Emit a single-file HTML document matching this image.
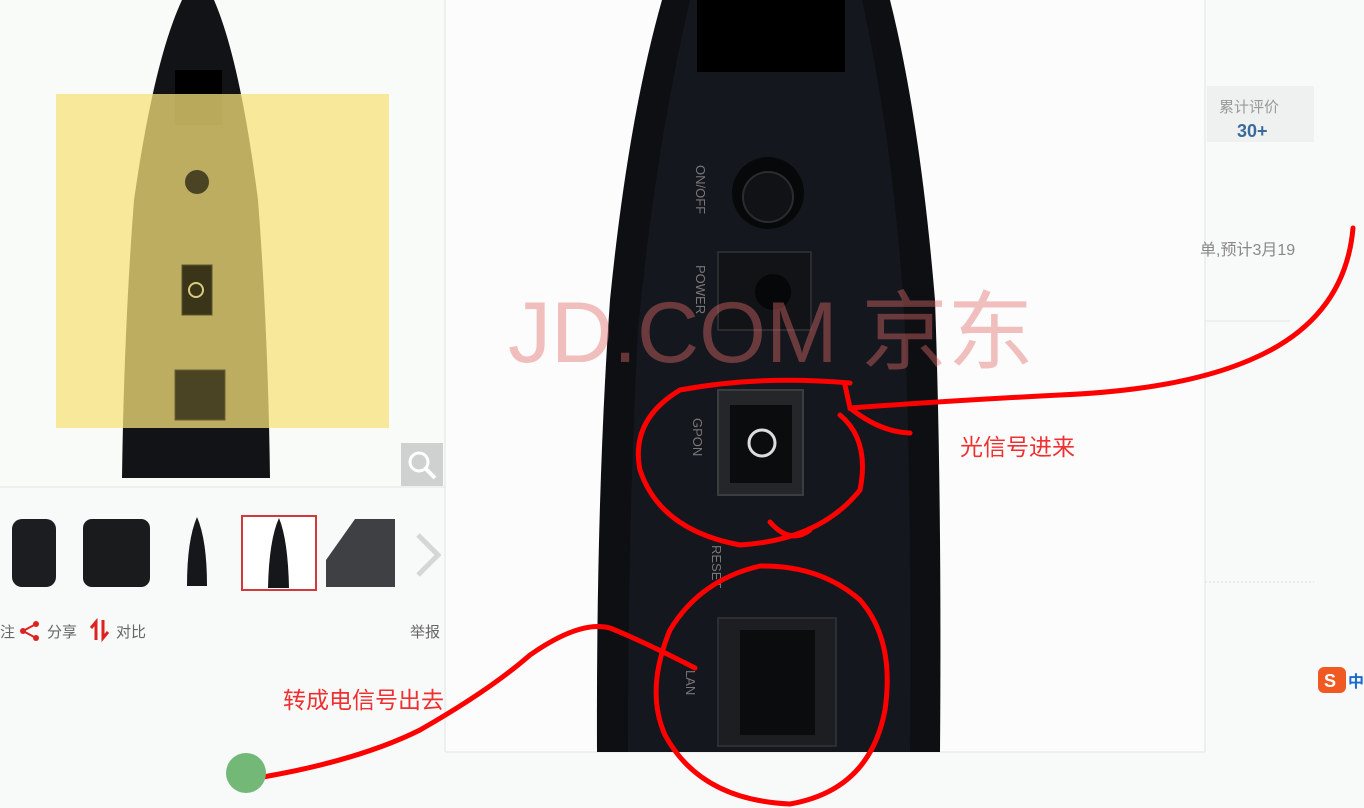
<!DOCTYPE html>
<html><head><meta charset="utf-8"><style>
html,body{margin:0;padding:0;width:1364px;height:808px;overflow:hidden;background:#f7faf8;font-family:"Liberation Sans","Noto Sans CJK SC",sans-serif}
svg{position:absolute;left:0;top:0}
</style></head><body>
<svg width="1364" height="808" viewBox="0 0 1364 808" xmlns="http://www.w3.org/2000/svg">
<rect width="1364" height="808" fill="#f7faf8"/>
<rect x="0" y="0" width="445" height="487" fill="#f9fbf9"/>
<line x1="0" y1="487" x2="445" y2="487" stroke="#e3e6e4"/>
<line x1="445" y1="0" x2="445" y2="752" stroke="#e3e6e4"/>
<path d="M182 0 L214 0 Q240 60 258 200 Q268 330 270 478 L122 478 Q124 330 134 200 Q154 60 182 0Z" fill="#111316"/>
<path d="M175 70 L222 70 L222 125 L175 125Z" fill="#000"/>
<rect x="56" y="94" width="333" height="334" fill="#f6e27a" opacity="0.75"/>
<circle cx="197" cy="182" r="12" fill="#4a4424"/>
<rect x="182" y="265" width="30" height="50" fill="#3a3518" stroke="#5c5530"/>
<circle cx="196" cy="290" r="7" fill="none" stroke="#d8cc80" stroke-width="2"/>
<rect x="175" y="370" width="50" height="50" fill="#4a4424" stroke="#6a6035"/>
<rect x="401" y="443" width="42" height="43" fill="#cfd1d0"/>
<circle cx="419" cy="462" r="9" fill="none" stroke="#fff" stroke-width="3"/>
<line x1="426" y1="469" x2="435" y2="478" stroke="#fff" stroke-width="4"/>
<rect x="12" y="519" width="44" height="68" rx="10" fill="#1c1d20"/>
<rect x="83" y="519" width="67" height="68" rx="9" fill="#1a1b1d"/>
<path d="M197 517 Q207 540 207 586 L187 586 Q187 540 197 517Z" fill="#15171a"/>
<rect x="242" y="516" width="74" height="74" fill="#fff" stroke="#d03a3a" stroke-width="2"/>
<path d="M279 518 Q288 540 289 588 L268 588 Q269 540 279 518Z" fill="#15171a"/>
<path d="M355 519 L395 519 L395 587 L326 587 L326 560Z" fill="#3e4044"/>
<path d="M418 535 L438 555 L418 575" fill="none" stroke="#d5d7d6" stroke-width="5"/>
<text x="0" y="637" font-size="15" fill="#666">注</text>
<circle cx="23" cy="631" r="3" fill="#d22"/><circle cx="36" cy="624" r="3" fill="#d22"/><circle cx="36" cy="638" r="3" fill="#d22"/>
<path d="M23 631 L36 624 M23 631 L36 638" stroke="#d22" stroke-width="2"/>
<text x="47" y="637" font-size="15" fill="#666">分享</text>
<path d="M96 640 L96 622 L91 628 M103 620 L103 638 L108 632" stroke="#d22" stroke-width="3" fill="none"/>
<text x="116" y="637" font-size="15" fill="#666">对比</text>
<text x="410" y="637" font-size="15" fill="#666">举报</text>
<rect x="446" y="0" width="758" height="752" fill="#fbfcfb"/>
<line x1="1205" y1="0" x2="1205" y2="752" stroke="#e3e6e4"/>
<line x1="446" y1="752" x2="1205" y2="752" stroke="#e3e6e4"/>
<path d="M662 0 L890 0 Q920 120 935 300 Q942 500 940 752 L597 752 Q596 500 610 300 Q628 120 662 0Z" fill="#0d0f13"/>
<path d="M690 0 L862 0 Q895 150 905 330 Q912 520 910 752 L628 752 Q628 520 638 330 Q655 150 690 0Z" fill="#14171d"/>
<rect x="697" y="0" width="148" height="72" fill="#000"/>
<circle cx="768" cy="193" r="36" fill="#07080a"/>
<circle cx="768" cy="197" r="25" fill="#101216" stroke="#2a2c30" stroke-width="2"/>
<rect x="718" y="252" width="93" height="78" fill="#111317" stroke="#2a2c30" stroke-width="2"/>
<circle cx="773" cy="292" r="18" fill="#060708"/>
<rect x="718" y="390" width="85" height="105" fill="#24262a" stroke="#3a3c40" stroke-width="2"/>
<rect x="730" y="405" width="62" height="78" fill="#0b0c0e"/>
<circle cx="762" cy="443" r="13" fill="none" stroke="#ddd" stroke-width="3"/>
<rect x="718" y="618" width="118" height="128" fill="#1c1e22" stroke="#2c2e33" stroke-width="2"/>
<rect x="740" y="630" width="75" height="105" fill="#0b0c0e"/>
<g font-size="13" fill="#777" font-family="Liberation Sans,sans-serif">
<text transform="translate(696,165) rotate(90)">ON/OFF</text>
<text transform="translate(696,265) rotate(90)">POWER</text>
<text transform="translate(693,418) rotate(90)">GPON</text>
<text transform="translate(712,545) rotate(90)">RESET</text>
<text transform="translate(686,670) rotate(90)">LAN</text>
</g>
<text x="508" y="362" font-size="86" fill="#e06a6a" opacity="0.42" font-family="Liberation Sans,'Noto Sans CJK SC',sans-serif">JD.COM 京东</text>
<rect x="1207" y="86" width="107" height="56" fill="#eff1f0"/>
<text x="1219" y="112" font-size="15" fill="#999">累计评价</text>
<text x="1237" y="137" font-size="18" fill="#3a6a9c" font-weight="bold">30+</text>
<text x="1200" y="255" font-size="16" fill="#888">单,预计3月19</text>
<line x1="1205" y1="321" x2="1290" y2="321" stroke="#e6e6e6"/>
<line x1="1205" y1="582" x2="1314" y2="582" stroke="#ddd" stroke-dasharray="2 2"/>
<rect x="1318" y="667" width="28" height="26" rx="6" fill="#f05a22"/>
<text x="1324" y="687" font-size="18" fill="#fff" font-weight="bold">S</text>
<text x="1348" y="687" font-size="16" fill="#1a6ad0" font-weight="bold">中</text>
<g fill="none" stroke="#f00" stroke-width="5" stroke-linecap="round">
<path d="M1353 228 Q1345 320 1250 360 Q1180 390 1060 395 Q960 400 850 408 L845 385 M850 408 Q880 432 910 433"/>
<path d="M850 383 Q760 375 680 390 Q630 420 640 470 Q660 530 740 545 Q820 540 860 490 Q870 440 840 415"/>
<path d="M770 522 Q790 545 810 530"/>
<path d="M760 566 Q700 580 670 630 Q645 690 665 735 Q700 800 790 804 Q870 790 885 710 Q895 640 860 600 Q820 565 760 566"/>
<path d="M263 777 Q360 760 420 730 Q490 690 530 655 Q580 620 610 628 Q640 640 695 668"/>
</g>
<circle cx="246" cy="773" r="20" fill="#73b876"/>
<text x="960" y="455" font-size="23" fill="#f03030">光信号进来</text>
<text x="283" y="708" font-size="23" fill="#f03030">转成电信号出去</text>
</svg>
</body></html>
